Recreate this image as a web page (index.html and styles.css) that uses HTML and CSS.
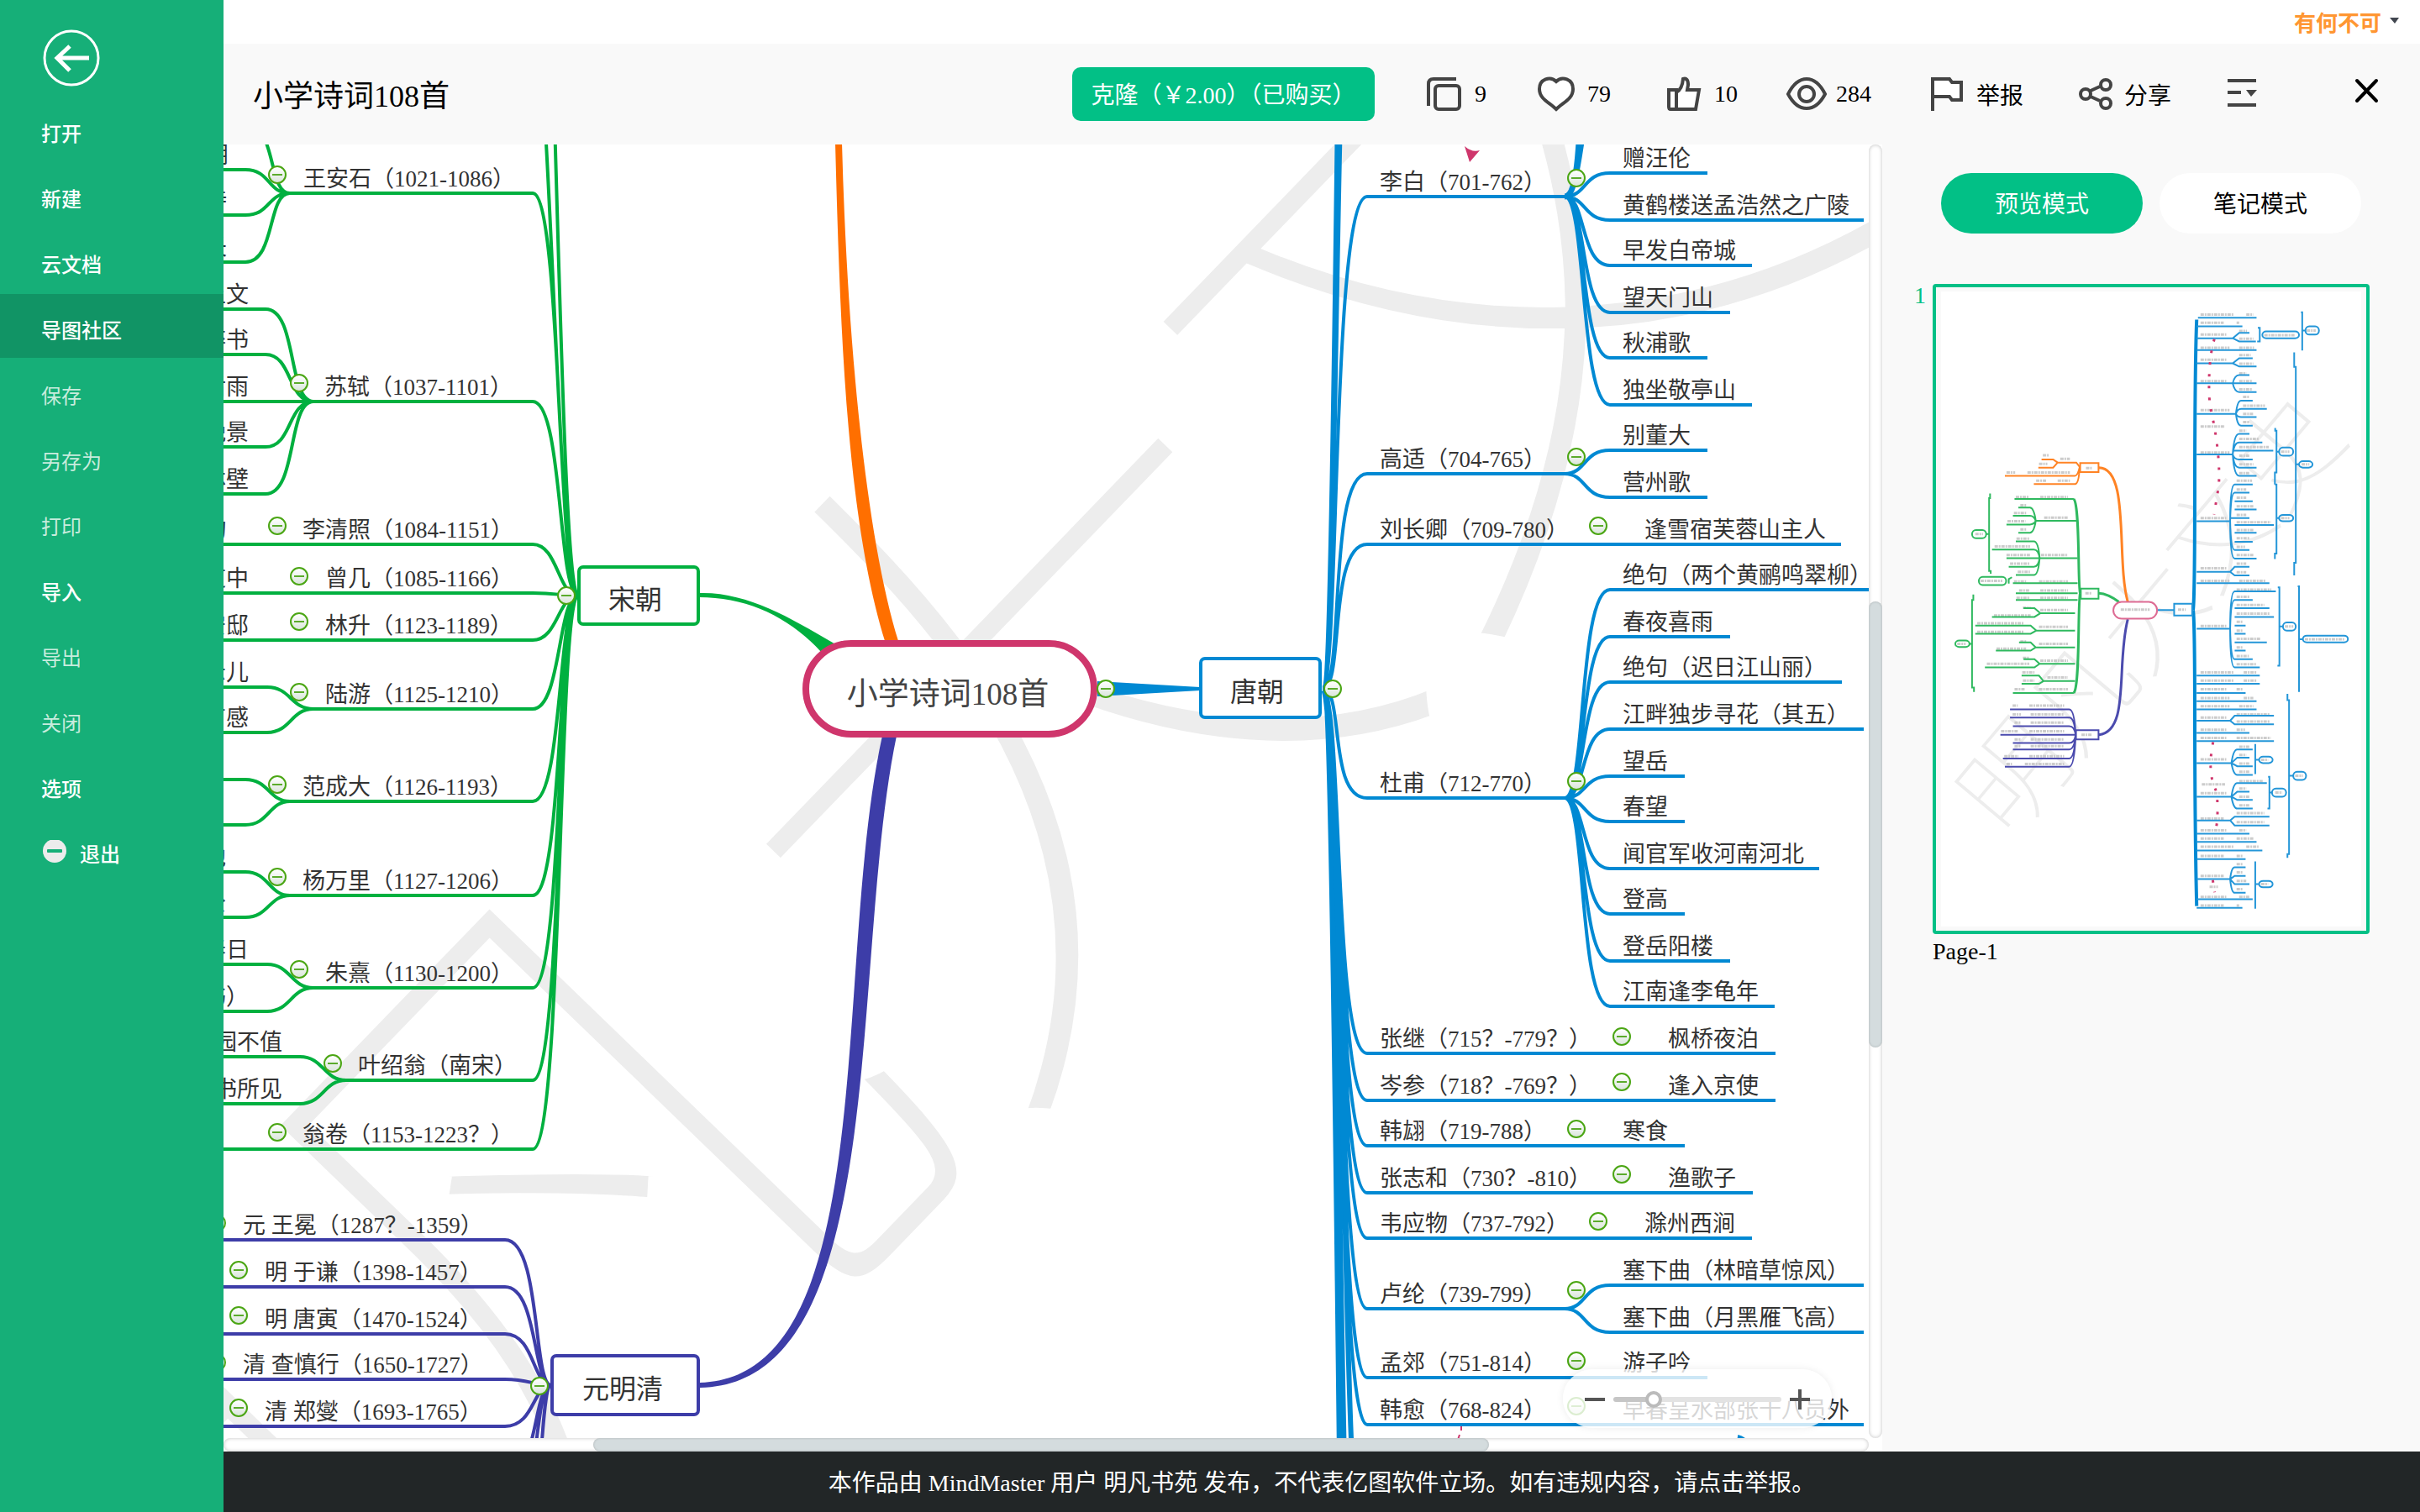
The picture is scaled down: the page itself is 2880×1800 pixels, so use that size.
FILE: index.html
```html
<!DOCTYPE html>
<html lang="zh-CN">
<head>
<meta charset="utf-8">
<title>小学诗词108首</title>
<link rel="stylesheet" href="styles.css">
</head>
<body>
<nav class="sidebar">
  <button class="back" aria-label="返回">
    <svg width="68" height="68" viewBox="0 0 68 68" fill="none" stroke="#fff"><circle cx="34" cy="34" r="32" stroke-width="3"/><path d="M55 34H17M32 20L17 34L32 49" stroke-width="5"/></svg>
  </button>
  <button class="item">打开</button>
  <button class="item">新建</button>
  <button class="item">云文档</button>
  <button class="item active">导图社区</button>
  <button class="item" disabled>保存</button>
  <button class="item" disabled>另存为</button>
  <button class="item" disabled>打印</button>
  <button class="item">导入</button>
  <button class="item" disabled>导出</button>
  <button class="item" disabled>关闭</button>
  <button class="item">选项</button>
  <button class="item"><svg width="30" height="30" viewBox="0 0 30 30"><circle cx="16" cy="13" r="14" fill="#ececec"/><rect x="7" y="11" width="18" height="4" rx="1" fill="#16af78"/></svg>退出</button>
</nav>
<div class="main">
  <div class="userbar"><button class="user">有何不可<svg width="12" height="8" viewBox="0 0 12 8"><path d="M0 0H11L6 7Z" fill="#41464f"/></svg></button></div>
  <header class="header">
    <h1>小学诗词108首</h1>
    <button class="clone">克隆（￥2.00）（已购买）</button>
    <div class="tools">
      <button class="tool t-copy"><svg width="42" height="42" viewBox="0 0 42 42"><path d="M2 35V9Q2 3 8 3H35"/><rect x="10" y="11" width="29" height="28" rx="4"/></svg>9</button>
      <button class="tool t-heart"><svg width="44" height="42" viewBox="0 0 44 42"><path fill="#fff" d="M22 39C14 31 2 27 2 15C2 3 15 -1 22 6C29 -1 42 3 42 15C42 27 30 31 22 39Z"/></svg>79</button>
      <button class="tool t-like"><svg width="42" height="42" viewBox="0 0 42 42"><path fill="#fff" d="M3 16H12V39H5Q3 39 3 36ZM12 19Q19 15 20 3Q26 1 26 10L25 16H39L35 39H12Z"/></svg>10</button>
      <button class="tool t-view"><svg width="50" height="42" viewBox="0 0 50 42"><path d="M3 21Q12 3 25 3Q38 3 47 21Q38 38 25 38Q12 38 3 21Z"/><circle cx="25" cy="21" r="9"/></svg>284</button>
      <button class="tool t-flag"><svg width="40" height="42" viewBox="0 0 40 42"><path fill="#fff" d="M3 25V3H23L26 7H37V28H26L23 24H3"/><path d="M3 3V41"/></svg>举报</button>
      <button class="tool t-share"><svg width="42" height="42" viewBox="0 0 42 42"><path d="M14 17L25 12M14 24L25 29"/><circle cx="8" cy="21" r="6"/><circle cx="32" cy="10" r="6"/><circle cx="32" cy="32" r="6"/></svg>分享</button>
      <button class="tool t-menu" aria-label="菜单"><svg width="38" height="42" viewBox="0 0 38 42"><path d="M2 5H36M2 19H18M2 34H36"/><path d="M24 16H37L30 24Z" fill="#444" stroke="none"/></svg></button>
      <button class="tool t-close" aria-label="关闭"><svg width="30" height="42" viewBox="0 0 30 42"><path stroke="#000" stroke-linecap="round" d="M3 5L26 29M26 5L3 29"/></svg></button>
    </div>
  </header>
  <div class="workspace">
    <div class="canvas">
      <div class="plane">
        <svg class="map" width="2880" height="1800">
          <text class="watermark" transform="translate(1227 845) rotate(-46)" x="0" y="298">明凡大文史</text>
          <g class="green">
            <path d="M688 709C664 709 660 -300 634 -300M688 709C664 709 654 20 634 20M688 709C664 709 668 230 634 230H343M688 709C664 709 670 478 634 478H370M688 709C664 709 664 648 634 648H260M688 709C664 709 664 706 634 706H260M688 709C664 709 664 762 634 762H260M688 709C664 709 668 844 634 844H370M688 709C664 709 670 954 634 954H343M688 709C664 709 670 1066 634 1066H343M688 709C664 709 670 1176 634 1176H370M688 709C664 709 670 1286 634 1286H410M688 709C664 709 670 1368 634 1368H260"/>
            <path d="M345 230C318 230 330 148 292 148M345 230C318 230 322 202 292 202H260M345 230C318 230 322 256 292 256H260M345 230C318 230 328 312 292 312H260"/>
            <path d="M373 478C342 478 354 368 316 368H260M373 478C342 478 348 422 316 422H260M373 478H260M373 478C342 478 348 532 316 532H260M373 478C342 478 354 588 316 588H260"/>
            <path d="M373 844C346 844 346 818 318 818H260M373 844C346 844 346 872 318 872H260M345 954C320 954 320 928 292 928H260M345 954C320 954 320 982 292 982H260M345 1066C320 1066 320 1038 292 1038H260M345 1066C320 1066 320 1092 292 1092H260M373 1176C346 1176 346 1148 318 1148H260M373 1176C346 1176 346 1204 318 1204H260M412 1286C385 1286 385 1258 357 1258H260M412 1286C385 1286 385 1314 357 1314H260"/>
          </g>
          <g class="purple">
            <path d="M656 1649C634 1649 644 1476 601 1476H260M656 1649C634 1649 640 1532 601 1532H260M656 1649C634 1649 636 1588 601 1588H260M656 1649C634 1649 630 1642 601 1642H260M656 1649C634 1649 636 1698 601 1698H260M656 1649C634 1649 642 1756 601 1756M656 1649C634 1649 644 1812 601 1812M656 1649C640 1649 648 1880 610 1880"/>
          </g>
          <g class="blue">
            <path class="trunk" d="M1574 820C1596 820 1588 -900 1627 -900M1574 820C1594 820 1588 -400 1627 -400M1574 820C1598 820 1590 2200 1627 2200M1574 820C1596 820 1590 2800 1627 2800M1574 820C1602 820 1594 1900 1627 1900"/>
            <path d="M1574 820C1594 820 1584 234 1627 234H1865M1574 820C1600 820 1580 564 1627 564H1865M1574 820C1600 820 1580 648 1627 648H2191M1574 820C1600 820 1580 950 1627 950H1865M1574 820C1598 820 1586 1254 1627 1254H2113M1574 820C1598 820 1588 1310 1627 1310H2113M1574 820C1598 820 1588 1364 1627 1364H2005M1574 820C1598 820 1588 1420 1627 1420H2086M1574 820C1598 820 1588 1474 1627 1474H2085M1574 820C1598 820 1588 1558 1627 1558H1865M1574 820C1598 820 1588 1640 1627 1640H2032M1574 820C1598 820 1588 1696 1627 1696H2218"/>
            <path class="bold" d="M1862 234C1888 234 1876 60 1896 -60"/>
            <path d="M1862 234C1888 234 1880 80 1916 80M1862 234C1888 234 1884 206 1916 206H2032M1862 234C1888 234 1884 262 1916 262H2218M1862 234C1888 234 1880 316 1916 316H2085M1862 234C1888 234 1880 372 1916 372H2059M1862 234C1888 234 1880 426 1916 426H2032M1862 234C1888 234 1880 482 1916 482H2085M1862 564C1888 564 1884 536 1916 536H2032M1862 564C1888 564 1884 592 1916 592H2032"/>
            <path d="M1862 950C1888 950 1878 702 1916 702H2240M1862 950C1888 950 1880 758 1916 758H2059M1862 950C1888 950 1880 812 1916 812H2192M1862 950C1888 950 1880 868 1916 868H2218M1862 950C1888 950 1884 924 1916 924H2005M1862 950C1888 950 1884 978 1916 978H2005M1862 950C1888 950 1880 1034 1916 1034H2165M1862 950C1888 950 1880 1088 1916 1088H2005M1862 950C1888 950 1880 1144 1916 1144H2059M1862 950C1888 950 1878 1198 1916 1198H2112M1862 1558C1888 1558 1884 1530 1916 1530H2218M1862 1558C1888 1558 1884 1586 1916 1586H2218M2068 1710Q2074 1711 2078 1716"/>
          </g>
          <path fill="#ff6f00" d="M994 170C1000 400 1008 620 1054 766H1070C1030 640 1008 400 1002 170Z"/>
          <path fill="#3d3da8" d="M1050 876C990 1150 1050 1640 833 1646V1652C1062 1648 1010 1150 1067 876Z"/>
          <path fill="#00b03f" d="M832 706C890 704 945 738 996 768L978 777C940 735 890 711 832 711Z"/>
          <path fill="#0089d3" d="M1306 811L1428 818V822L1306 829Z"/>
          <path fill="#cf366c" d="M1743 174Q1752 182 1761 179L1749 193Z"/>
          <path stroke="#cf366c" stroke-width="2" d="M1739 1698V1703M1737 1708L1735 1714"/>
          <rect class="root" x="959" y="766" width="343" height="108" rx="54"/>
          <g class="node"><rect x="689" y="675" width="142" height="68" rx="5" stroke="#00b03f"/><rect x="657" y="1614" width="174" height="70" rx="5" stroke="#3d3da8"/><rect x="1429" y="784" width="142" height="70" rx="5" stroke="#0089d3"/></g>
          <text class="root-text" x="1128" y="839">小学诗词108首</text>
          <g class="topic"><text x="756" y="725">宋朝</text><text x="741" y="1665">元明清</text><text x="1496" y="835">唐朝</text></g>
          <g class="leaf">
            <text x="361" y="222">王安石（1021-1086）</text><text x="386" y="470">苏轼（1037-1101）</text><text x="360" y="640">李清照（1084-1151）</text><text x="387" y="698">曾几（1085-1166）</text><text x="387" y="754">林升（1123-1189）</text><text x="387" y="836">陆游（1125-1210）</text><text x="360" y="946">范成大（1126-1193）</text><text x="360" y="1058">杨万里（1127-1206）</text><text x="387" y="1168">朱熹（1130-1200）</text><text x="426" y="1278">叶绍翁（南宋）</text><text x="360" y="1360">翁卷（1153-1223？）</text>
            <text x="289" y="1468">元 王冕（1287？-1359）</text><text x="315" y="1524">明 于谦（1398-1457）</text><text x="315" y="1580">明 唐寅（1470-1524）</text><text x="289" y="1634">清 查慎行（1650-1727）</text><text x="315" y="1690">清 郑燮（1693-1765）</text>
            <text x="1642" y="226">李白（701-762）</text><text x="1642" y="556">高适（704-765）</text><text x="1642" y="640">刘长卿（709-780）</text><text x="1642" y="942">杜甫（712-770）</text><text x="1642" y="1246">张继（715？-779？）</text><text x="1642" y="1302">岑参（718？-769？）</text><text x="1642" y="1356">韩翃（719-788）</text><text x="1642" y="1412">张志和（730？-810）</text><text x="1642" y="1466">韦应物（737-792）</text><text x="1642" y="1550">卢纶（739-799）</text><text x="1642" y="1632">孟郊（751-814）</text><text x="1642" y="1688">韩愈（768-824）</text>
            <text x="1931" y="198">赠汪伦</text><text x="1931" y="254">黄鹤楼送孟浩然之广陵</text><text x="1931" y="308">早发白帝城</text><text x="1931" y="364">望天门山</text><text x="1931" y="418">秋浦歌</text><text x="1931" y="474">独坐敬亭山</text><text x="1931" y="528">别董大</text><text x="1931" y="584">营州歌</text><text x="1957" y="640">逢雪宿芙蓉山主人</text>
            <text x="1931" y="694">绝句（两个黄鹂鸣翠柳）</text><text x="1931" y="750">春夜喜雨</text><text x="1931" y="804">绝句（迟日江山丽）</text><text x="1931" y="860">江畔独步寻花（其五）</text><text x="1931" y="916">望岳</text><text x="1931" y="970">春望</text><text x="1931" y="1026">闻官军收河南河北</text><text x="1931" y="1080">登高</text><text x="1931" y="1136">登岳阳楼</text><text x="1931" y="1190">江南逢李龟年</text>
            <text x="1985" y="1246">枫桥夜泊</text><text x="1985" y="1302">逢入京使</text><text x="1931" y="1356">寒食</text><text x="1985" y="1412">渔歌子</text><text x="1957" y="1466">滁州西涧</text><text x="1931" y="1522">塞下曲（林暗草惊风）</text><text x="1931" y="1578">塞下曲（月黑雁飞高）</text><text x="1931" y="1632">游子吟</text><text x="1931" y="1688">早春呈水部张十八员外</text>
          </g>
          <g class="leaf end">
            <text x="272" y="194">阴</text><text x="270" y="248">诗</text><text x="270" y="304">长</text>
            <text x="296" y="360">上文</text><text x="296" y="414">醉书</text><text x="296" y="470">后雨</text><text x="296" y="524">晚景</text><text x="296" y="580">林壁</text><text x="270" y="640">句</text><text x="296" y="698">道中</text><text x="296" y="754">安邸</text><text x="296" y="810">示儿</text><text x="296" y="864">有感</text><text x="269" y="1030">池</text><text x="269" y="1084">公</text><text x="296" y="1140">春日</text><text x="296" y="1196">书）</text><text x="336" y="1250">园不值</text><text x="336" y="1306">书所见</text>
          </g>
        </svg>
        <button class="fold" aria-label="折叠" style="left:330px;top:208px"></button>
        <button class="fold" aria-label="折叠" style="left:356px;top:456px"></button>
        <button class="fold" aria-label="折叠" style="left:330px;top:626px"></button>
        <button class="fold" aria-label="折叠" style="left:356px;top:686px"></button>
        <button class="fold" aria-label="折叠" style="left:356px;top:740px"></button>
        <button class="fold" aria-label="折叠" style="left:356px;top:824px"></button>
        <button class="fold" aria-label="折叠" style="left:330px;top:934px"></button>
        <button class="fold" aria-label="折叠" style="left:330px;top:1044px"></button>
        <button class="fold" aria-label="折叠" style="left:356px;top:1154px"></button>
        <button class="fold" aria-label="折叠" style="left:396px;top:1266px"></button>
        <button class="fold" aria-label="折叠" style="left:330px;top:1348px"></button>
        <button class="fold" aria-label="折叠" style="left:674px;top:709px"></button>
        <button class="fold" aria-label="折叠" style="left:258px;top:1456px"></button>
        <button class="fold" aria-label="折叠" style="left:284px;top:1512px"></button>
        <button class="fold" aria-label="折叠" style="left:284px;top:1566px"></button>
        <button class="fold" aria-label="折叠" style="left:258px;top:1622px"></button>
        <button class="fold" aria-label="折叠" style="left:284px;top:1676px"></button>
        <button class="fold" aria-label="折叠" style="left:642px;top:1650px"></button>
        <button class="fold" aria-label="折叠" style="left:1316px;top:820px"></button>
        <button class="fold" aria-label="折叠" style="left:1586px;top:820px"></button>
        <button class="fold" aria-label="折叠" style="left:1876px;top:212px"></button>
        <button class="fold" aria-label="折叠" style="left:1876px;top:544px"></button>
        <button class="fold" aria-label="折叠" style="left:1902px;top:626px"></button>
        <button class="fold" aria-label="折叠" style="left:1876px;top:930px"></button>
        <button class="fold" aria-label="折叠" style="left:1930px;top:1234px"></button>
        <button class="fold" aria-label="折叠" style="left:1930px;top:1288px"></button>
        <button class="fold" aria-label="折叠" style="left:1876px;top:1344px"></button>
        <button class="fold" aria-label="折叠" style="left:1930px;top:1398px"></button>
        <button class="fold" aria-label="折叠" style="left:1902px;top:1454px"></button>
        <button class="fold" aria-label="折叠" style="left:1876px;top:1536px"></button>
        <button class="fold" aria-label="折叠" style="left:1876px;top:1620px"></button>
        <button class="fold" aria-label="折叠" style="left:1876px;top:1674px"></button>
      </div>
      <div class="zoombar">
        <button class="step" aria-label="缩小"></button>
        <input type="range" min="0" max="100" value="21" aria-label="缩放">
        <button class="step plus" aria-label="放大"></button>
      </div>
    </div>
    <div class="scroll vertical"><div class="thumb"></div></div>
    <div class="scroll horizontal"><div class="thumb"></div></div>
    <aside class="panel">
      <div class="modes"><button class="mode on">预览模式</button><button class="mode">笔记模式</button></div>
      <div class="page">
        <span class="number">1</span>
        <figure>
          <svg class="preview" viewBox="0 0 512 766">
            <rect x="6" y="5" width="500" height="756" fill="#fff"/>
            <text class="mini-mark" transform="translate(254 388) rotate(-50)" x="0" y="47">明凡大文史</text>
            <g transform="scale(.383 .542) translate(-116 -41)">
              <g class="mini-text">
                <path d="M938 101H1040M1080 101H1102M938 119H1010M1050 119H1058M938 145H1018M1058 137H1082M1058 154H1102M938 174H1028M1058 174H1104M938 200H1018M1058 190H1094M1058 209H1102M938 247H1018M1058 230H1080M1058 247H1100M1058 265H1100M938 311H1028M1070 282H1090M1070 301H1138M1070 319H1102M1070 337H1090M938 347H1014M1058 356H1080M1058 374H1120M1058 392H1150M1058 411H1090M1058 430H1102M1058 449H1090M938 404H1028M938 548H1018M1050 466H1098M1050 485H1080M1050 503H1080M1050 522H1102M1050 541H1080M1050 557H1156M1050 574H1102M1050 592H1090M1050 611H1076M1050 629H1102M938 658H1018M1050 648H1080M1050 667H1080M938 686H1028M1058 686H1140M1050 705H1158M1050 721H1090M1050 739H1136M1050 758H1152M1050 776H1068M1050 795H1068M1050 813H1124M1050 832H1068M1050 851H1088M1050 869H1112M938 785H1018M938 887H1040M1072 887H1112M938 905H1040M1072 905H1112M938 924H1018M1050 924H1068M938 943H1028M1072 943H1102M938 961H1028M1058 961H1102M1050 979H1152M1050 995H1152M938 986H1018M938 1013H1018M1050 1013H1076M938 1031H1018M1050 1031H1156M938 1078H1018M1058 1050H1090M1058 1068H1080M1058 1087H1090M1058 1105H1090M942 1133H1014M1058 1126H1134M1058 1142H1080M1058 1160H1090M1058 1179H1090M938 1152H1018M938 1208H1010M1050 1196H1136M1050 1216H1136M938 1234H1018M1058 1234H1080M938 1252H1010M1050 1252H1102M938 1270H1040M1080 1270H1118M938 1290H1010M1050 1290H1068M938 1334H1010M966 1358H992M1050 1308H1068M1050 1326H1068M1050 1345H1080M1050 1363H1068M938 1380H1018M1058 1380H1090M938 1399H1010M1050 1399H1058"/>
                <path d="M448 410H466M436 429H462M335 448H362M400 448H532M502 418H532M427 466H458M494 466H532M364 502H406M440 502H526M378 520H396M358 537H396M338 555H394M378 573H396M452 547H526M366 593H408M298 610H408M335 629H408M346 648H408M370 666H408M442 629H526M358 687H396M436 687H526M374 707H408M440 707H526M366 723H408M440 723H526M386 745H410M296 762H410M440 750H526M244 779H390M244 798H390M436 787H526M378 819H396M304 835H396M436 824H526M386 855H406M274 868H406M440 861H526M384 887H422M386 905H422M462 898H526M360 924H394M436 924H526M354 960H370M406 960H514M354 979H380M410 979H514M360 997H380M410 997H514M318 1016H370M406 1016H514M360 1034H380M410 1034H514M360 1049H380M410 1049H514M328 1071H372M406 1071H514M335 1088H352M392 1088H514"/>
              </g>
              <g class="mini-line" stroke="#2496d8">
                <path class="mini-trunk" stroke="#0089d3" d="M915 750C925 700 915 300 926 112M915 750C925 800 915 1100 926 1400"/>
                <path d="M804 750H856M930 108H1112M926 127H1068M926 153H1038L1058 141H1090M1038 153L1058 160H1110M926 179H1112M926 208H1038L1058 197H1100M1038 208L1058 215H1112M926 252H1038Q1044 234 1058 234H1090M1038 252H1112M1038 252Q1044 271 1058 271H1112M926 319H1048Q1052 290 1064 290H1100M1048 319Q1052 308 1064 308H1144M1048 319Q1052 326 1064 326H1112M1048 319Q1052 345 1064 345H1100M926 408H1038Q1042 363 1058 363H1090M1038 408Q1042 382 1058 382H1130M1038 400H1164M1038 408Q1042 419 1058 419H1100M1038 408Q1042 437 1058 437H1112M1038 408Q1042 455 1058 455H1112"/>
                <path d="M926 555H1030Q1030 474 1044 474H1100M1044 492H1090M1044 511H1100M1044 529H1112M1030 548H1090M1044 563H1166M1044 580H1112M1044 600H1100M1044 618H1090M1030 555Q1030 637 1044 637H1112M1030 555Q1032 492 1044 492M1030 555Q1032 618 1044 618M926 666H1030L1044 655H1090M1030 666L1044 674H1090M926 691H1152M926 791H1030Q1030 709 1044 709H1172M1044 728H1100M1044 746H1152M1044 765H1166M1044 784H1078M1044 802H1078M1044 821H1144M1044 839H1078M1044 858H1100M1030 791Q1030 876 1044 876H1122M1030 791Q1032 728 1044 728M1030 791Q1032 858 1044 858M926 894H1122M926 912H1122M926 932H1078M926 950H1112M926 968H1112M926 993H1030L1044 982H1166M1030 993L1044 1001H1166M926 1020H1090M926 1038H1166"/>
                <path d="M926 1086H1034Q1040 1056 1052 1056H1100M1034 1086L1052 1074H1090M1034 1086L1052 1093H1100M1034 1086Q1040 1112 1052 1112H1100M926 1160H1034Q1040 1130 1052 1130H1144M1034 1160L1052 1149H1090M1034 1160L1052 1167H1100M1034 1160Q1040 1186 1052 1186H1100M926 1212H1030L1044 1204H1152M1030 1212L1044 1223H1152M926 1241H1090M926 1259H1112M926 1278H1130M926 1297H1078M926 1341H1030Q1034 1315 1044 1315H1078M1030 1341L1044 1334H1078M1030 1341L1044 1352H1090M1030 1341Q1034 1371 1044 1371H1078M926 1385H1100M926 1404H1068"/>
                <path d="M1116 130H1122V160H1114M1250 96H1254V180M1254 136H1264M1229 184V216H1234V646H1229V674M1234 430H1244M1170 350V356H1174V448H1169V474M1174 402H1182M1169 474H1174V626H1169V638M1174 548H1182M1178 700H1183V872H1177M1183 786H1194M1240 698H1244V930M1244 814H1256M1208 934V948H1213V1286H1208V1294M1213 1114H1226M1108 1044V1110M1108 1079H1120M1148 1116H1152V1186H1146M1152 1151H1160M1108 1302V1406M1108 1352H1120"/>
                <rect x="856" y="736" width="56" height="26"/><rect x="1130" y="138" width="114" height="15" rx="12"/><rect x="1264" y="127" width="42" height="18" rx="12"/><rect x="1182" y="393" width="44" height="18" rx="12"/><rect x="1182" y="541" width="44" height="14" rx="12"/><rect x="1244" y="423" width="42" height="14" rx="12"/><rect x="1194" y="777" width="40" height="18" rx="12"/><rect x="1256" y="806" width="140" height="15" rx="12"/><rect x="1226" y="1105" width="40" height="18" rx="12"/><rect x="1120" y="1072" width="42" height="14" rx="12"/><rect x="1160" y="1142" width="44" height="18" rx="12"/><rect x="1120" y="1345" width="42" height="14" rx="12"/>
              </g>
              <g class="mini-line" stroke="#2fb95f">
                <path class="mini-bold" d="M564 713C556 700 564 520 544 506M564 713C556 730 564 920 544 932M622 713Q650 714 684 732"/>
                <path d="M544 506H360M556 554H426Q420 525 408 525H372M426 554Q420 543 408 543H355M426 554Q420 562 408 562H335M426 554Q420 580 408 580H372M556 636H438Q434 599 420 599H364M438 636Q434 617 420 617H290M438 636H335M438 636Q434 655 420 655H342M438 636Q434 673 420 673H364M556 691H355M556 713H364M556 728H364M548 757H440L422 746H388M440 757L422 765H290M548 795H428L410 784H238M428 795L410 802H238M548 832H426L410 821H374M426 832L410 839H302M548 868H438L422 858H388M438 868L422 876H268M548 906H450L436 894H382M450 906L436 912H382M544 932H355M284 494V504H281V664H286V670M281 583H272M352 678L342 682V692M232 716V728H228V920H234V930M228 824H220"/>
                <rect x="566" y="703" width="55" height="22"/><rect x="228" y="574" width="44" height="18" rx="12"/><rect x="249" y="677" width="85" height="18" rx="12"/><rect x="176" y="817" width="44" height="14" rx="12"/>
              </g>
              <g class="mini-line" stroke="#ff8324"><path class="mini-bold" d="M622 437C720 437 675 640 712 732"/><path d="M564 437L552 426H494L480 419H444M494 426L480 437H434M562 437Q556 455 548 455H330M562 437Q560 473 548 473H420"/><rect x="564" y="427" width="57" height="20"/></g>
              <g class="mini-line" stroke="#4b4bae"><path class="mini-bold" d="M622 1024C720 1016 675 870 712 770"/><path d="M550 1024Q546 968 530 968H346M550 1024Q546 986 530 986H346M550 1024Q546 1005 530 1005H355M550 1024H316M550 1024Q546 1042 530 1042H355M550 1024Q546 1056 530 1056H355M550 1024Q546 1076 530 1076H324M550 1024Q546 1094 530 1094H330"/><rect x="551" y="1014" width="70" height="20"/></g>
              <rect class="mini-root" x="667" y="732" width="136" height="37" rx="26"/>
              <path class="mini-text" d="M582 438H600M580 713H600M568 1024H600M690 749H780M868 749H892M1136 146H1232M1268 136H1296M1188 402H1214M1188 548H1214M1252 430H1276M1200 786H1226M1262 814H1384M1126 1079H1148M1170 1151H1192M1232 1114H1256M1126 1352H1148M238 583H262M254 686H322M182 824H208"/>
              <path class="mini-dots" d="M981 155C960 200 962 290 970 310C990 370 1000 440 994 480L980 540M977 1040C960 1100 975 1130 985 1145C993 1160 992 1210 987 1226M976 1343L982 1370"/>
            </g>
          </svg>
          <figcaption>Page-1</figcaption>
        </figure>
      </div>
    </aside>
  </div>
  <footer class="footer">本作品由 MindMaster 用户 明凡书苑 发布，不代表亿图软件立场。如有违规内容，请点击举报。</footer>
</div>
</body>
</html>
```

FILE: styles.css
```css
* { box-sizing: border-box; }
body {
  margin: 0;
  min-height: 100vh;
  display: flex;
  font-family: "Liberation Serif", "Noto Sans CJK SC", serif;
  font-size: 28px;
  color: #000;
  background: #fff;
}
button { border: 0; margin: 0; padding: 0; background: none; font: inherit; color: inherit; }
svg { display: block; flex: none; }

/* Side menu */
.sidebar { width: 266px; flex: none; display: flex; flex-direction: column; gap: 2px; background: #16af78; }
.back { height: 80px; margin-top: 34px; padding-left: 51px; text-align: left; }
.back svg { margin-bottom: 10px; }
.item {
  height: 76px;
  padding: 6px 0 0 49px;
  display: flex;
  align-items: center;
  gap: 16px;
  font: 500 24px "Noto Sans CJK SC", sans-serif;
  color: #fff;
  text-align: left;
}
.item:disabled { font-weight: 400; color: #c8ecdd; }
.item.active { background: #119465; }

/* Top bars */
.main { flex: 1; min-width: 0; height: 100vh; display: flex; flex-direction: column; }
.userbar { height: 52px; padding: 0 24px 2px 0; display: flex; justify-content: flex-end; align-items: center; }
.user { display: flex; align-items: center; gap: 10px; font: 700 26px "Noto Sans CJK SC", sans-serif; color: #ff9632; }
.header { height: 120px; padding: 0 48px 0 35px; display: flex; align-items: center; background: #f9f9f9; }
.header h1 { margin: 0 auto 0 0; padding-bottom: 2px; font-size: 36px; font-weight: 400; }
.clone { width: 360px; height: 64px; padding-bottom: 2px; border-radius: 10px; background: #02c086; color: #fff; white-space: nowrap; }
.tools { display: flex; align-items: center; padding-left: 62px; }
.tool { display: flex; align-items: center; gap: 15px; white-space: nowrap; }
.tool svg { fill: none; stroke: #444; stroke-width: 4; }
.t-copy { width: 132px; }
.t-heart { width: 153px; }
.t-like { width: 142px; }
.t-view { width: 172px; gap: 10px; }
.t-flag { width: 177px; }
.t-share { width: 175px; gap: 12px; }
.t-menu { width: 153px; }

/* Work area */
.workspace { flex: 1; min-height: 0; display: grid; grid-template: minmax(0, 1fr) 16px / minmax(0, 1fr) 16px 640px; }
.canvas { position: relative; overflow: hidden; background: #fff; }
.plane { position: absolute; left: -266px; top: -172px; }
.map { overflow: visible; }
.map .green, .map .blue, .map .purple { fill: none; stroke-width: 4; }
.map .green { stroke: #00b03f; }
.map .blue { stroke: #0089d3; }
.map .purple { stroke: #3d3da8; }
.map .trunk { stroke-width: 6; }
.map .bold { stroke-width: 7; }
.watermark { font: 300 785px "Noto Sans CJK SC", sans-serif; fill: #ededed; stroke: #fff; stroke-width: 14; text-anchor: middle; }
.root { fill: #fff; stroke: #cf366c; stroke-width: 8; }
.root-text { font-size: 37px; fill: #444; text-anchor: middle; }
.node rect { fill: #fff; stroke-width: 4; }
.topic { font-size: 32px; fill: #333; text-anchor: middle; }
.leaf { font-size: 27px; fill: #333; white-space: pre; }
.end { text-anchor: end; }
.fold {
  position: absolute;
  width: 22px;
  height: 22px;
  transform: translate(-50%, -50%);
  border: 2px solid #4ba614;
  border-radius: 50%;
  display: grid;
  place-items: center;
  background: linear-gradient(#fff, #dbe6dc);
}
.fold::before { content: ""; width: 12px; height: 2px; background: #5bab2c; }

.zoombar {
  position: absolute;
  right: 44px;
  bottom: 12px;
  width: 320px;
  height: 70px;
  padding: 2px 26px 0;
  display: flex;
  align-items: center;
  justify-content: space-between;
  border-radius: 35px;
  background: rgba(255, 255, 255, .8);
  box-shadow: 0 0 10px rgba(0, 0, 0, .08);
}
.step { position: relative; width: 24px; height: 24px; display: grid; place-items: center; }
.step::before, .step.plus::after { content: ""; grid-area: 1 / 1; width: 24px; height: 4px; background: #555; }
.step.plus::after { width: 4px; height: 24px; }
.zoombar input { appearance: none; width: 200px; height: 6px; margin: 0; border-radius: 3px; background: linear-gradient(90deg, #c6c6c6 24%, #e3e3e3 24%); }
.zoombar input::-webkit-slider-thumb { appearance: none; width: 20px; height: 20px; border: 4px solid #bbb; border-radius: 50%; background: #fff; }

.scroll { display: flex; border-radius: 8px; background: #fff; box-shadow: inset 0 0 4px rgba(0, 0, 0, .25); }
.scroll .thumb { border-radius: 8px; background: #d4dcde; box-shadow: inset 0 0 3px rgba(0, 0, 0, .2); }
.vertical { flex-direction: column; padding-top: 544px; }
.vertical .thumb { height: 531px; }
.horizontal { grid-area: 2 / 1; padding-left: 440px; }
.horizontal .thumb { width: 1066px; }

/* Preview panel */
.panel { grid-area: 1 / 3 / 3 / 4; padding: 34px 60px 0 38px; background: #f9f9f9; }
.modes { display: flex; gap: 20px; padding-left: 32px; }
.mode { width: 240px; height: 72px; padding-bottom: 2px; border-radius: 36px; background: #fff; }
.mode.on { background: #02c086; color: #fff; }
.page { display: flex; justify-content: space-between; margin-top: 60px; }
.number { color: #02c086; line-height: 28px; }
.page figure { margin: 0; width: 520px; }
.preview { width: 100%; border: 4px solid #02c086; border-radius: 4px; }
.page figcaption { line-height: 42px; }
.mini-mark { font: 300 126px "Noto Sans CJK SC", sans-serif; fill: #ededed; stroke: #fff; stroke-width: 2; text-anchor: middle; }
.preview path, .preview g rect { vector-effect: non-scaling-stroke; }
.mini-line { fill: none; stroke-width: 2; }
.preview .mini-line rect { fill: #fff; }
.mini-trunk { stroke-width: 4; }
.mini-bold { stroke-width: 3; }
.mini-text { fill: none; stroke: #ccc; stroke-width: 3; stroke-dasharray: 4 1 2 1; }
.preview .mini-root { fill: #fff; stroke: #dd6b93; stroke-width: 2; }
.mini-dots { fill: none; stroke: #cf366c; stroke-width: 3; stroke-dasharray: 3 11; }

.footer { height: 72px; padding-bottom: 2px; flex: none; display: flex; align-items: center; justify-content: center; background: #222627; color: #fff; }
```
